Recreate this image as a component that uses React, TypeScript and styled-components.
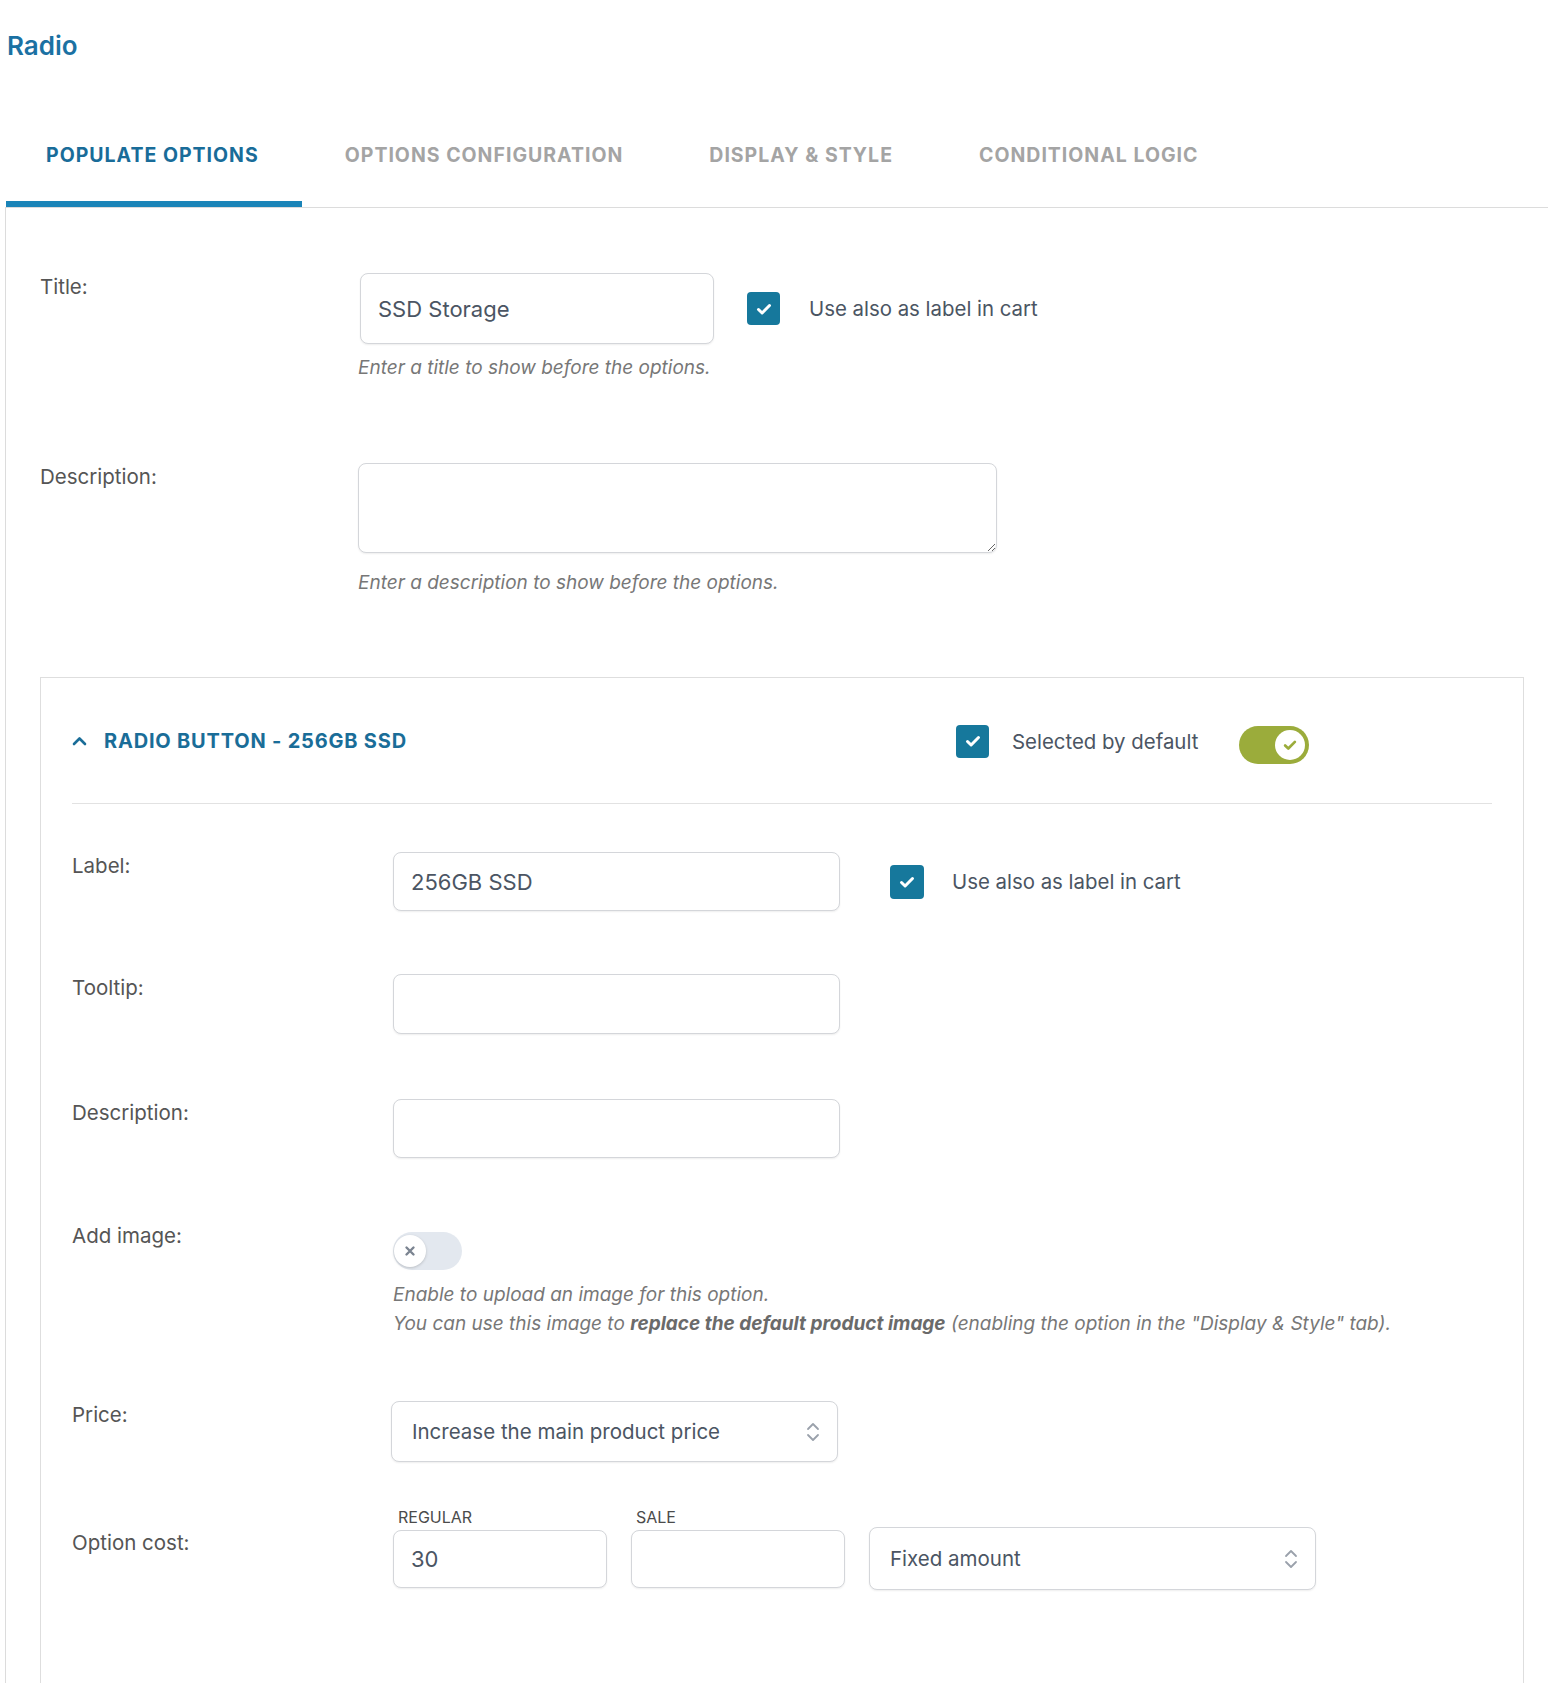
import React from 'react';
import styled, { createGlobalStyle } from 'styled-components';

const GlobalStyle = createGlobalStyle`
  * { box-sizing: border-box; }
  body {
    margin: 0;
    background: #ffffff;
    font-family: Inter, "Noto Sans", sans-serif;
    color: #4b5563;
  }
`;

const Page = styled.div`
  width: 1550px;
  height: 1683px;
  overflow: hidden;
`;

const Heading = styled.h2`
  margin: 0;
  padding: 30px 0 0 7px;
  font-size: 26px;
  line-height: 32px;
  font-weight: 600;
  color: #1b71a3;
`;

const Container = styled.div`
  margin: 45px 2px 0 5px;
`;

const TabList = styled.div`
  display: flex;
  padding-left: 1px;
  border-bottom: 1px solid #dcdcdc;
`;

const Tab = styled.div<{ active?: boolean }>`
  padding: 37px 43px 35px ${p => (p.active ? 40 : 43)}px;
  font-size: 19.5px;
  line-height: 22px;
  font-weight: 700;
  letter-spacing: 1px;
  text-transform: uppercase;
  color: ${p => (p.active ? '#196c99' : '#a4a4a4')};
  border-bottom: 6px solid ${p => (p.active ? '#1a84b8' : 'transparent')};
`;

const Panel = styled.div`
  border-left: 1px solid #dcdcdc;
  padding: 65px 24px 0 34px;
`;

const Row = styled.div<{ gap: number }>`
  display: grid;
  grid-template-columns: 318px 1fr;
  margin-bottom: ${p => p.gap}px;
`;

const Label = styled.div`
  font-size: 20.5px;
  line-height: 28px;
  color: #555;
`;

const Line = styled.div`
  display: flex;
  align-items: center;
`;

const TextInput = styled.input<{ w: number; h: number }>`
  width: ${p => p.w}px;
  height: ${p => p.h}px;
  padding: 0 17px;
  border: 1px solid #d4d6da;
  border-radius: 8px;
  box-shadow: 0 1px 2px rgba(0, 0, 0, 0.07);
  background: #fff;
  font-family: Inter, "Noto Sans", sans-serif;
  font-size: 22px;
  color: #4b5563;
  outline: none;
`;

const TextArea = styled.textarea`
  display: block;
  width: 639px;
  height: 90px;
  border: 1px solid #d4d6da;
  border-radius: 8px;
  box-shadow: 0 1px 2px rgba(0, 0, 0, 0.07);
  background: #fff;
  resize: vertical;
  outline: none;
`;

const Help = styled.div<{ top: number; lh?: number }>`
  margin-top: ${p => p.top}px;
  font-size: 19px;
  line-height: ${p => p.lh ?? 24}px;
  font-style: italic;
  color: #777;
  b { font-weight: 700; color: #6a6a6a; }
`;

const CheckBox = styled.span<{ left: number; size: number }>`
  display: inline-flex;
  align-items: center;
  justify-content: center;
  flex: 0 0 auto;
  width: ${p => p.size}px;
  height: ${p => p.size}px;
  margin-left: ${p => p.left}px;
  border-radius: 4px;
  background: #16789c;
`;

const CheckText = styled.span<{ left: number }>`
  margin-left: ${p => p.left}px;
  font-size: 20.4px;
  color: #4b5563;
  white-space: nowrap;
`;

const Card = styled.div`
  border: 1px solid #dedede;
  border-bottom: none;
  padding: 0 31px 160px;
`;

const CardHeader = styled.div`
  display: flex;
  align-items: center;
  height: 126px;
  padding: 43px 0 42px;
  border-bottom: 1px solid #e2e2e2;
`;

const CardTitle = styled.div`
  flex: 0 0 884px;
  display: flex;
  align-items: center;
  gap: 17px;
  font-size: 20px;
  font-weight: 700;
  letter-spacing: 0.8px;
  color: #1a6d98;
`;

const Fields = styled.div`
  padding-top: 48px;
`;

const FieldRow = styled.div<{ gap: number }>`
  display: grid;
  grid-template-columns: 321px 1fr;
  margin-bottom: ${p => p.gap}px;
`;

const Toggle = styled.span<{ on?: boolean; left?: number; top?: number }>`
  display: flex;
  align-items: center;
  justify-content: ${p => (p.on ? 'flex-end' : 'flex-start')};
  width: ${p => (p.on ? 70 : 69)}px;
  height: 38px;
  margin-left: ${p => p.left ?? 0}px;
  margin-top: ${p => p.top ?? 0}px;
  padding: 0 4px;
  border-radius: 19px;
  background: ${p => (p.on ? '#9bac3b' : '#e3e8ef')};
`;

const Knob = styled.span<{ on?: boolean }>`
  display: flex;
  align-items: center;
  justify-content: center;
  width: ${p => (p.on ? 30 : 32)}px;
  height: ${p => (p.on ? 30 : 32)}px;
  margin-left: ${p => (p.on ? 0 : -3)}px;
  border-radius: 50%;
  background: #fff;
  box-shadow: ${p => (p.on ? 'none' : '0 1px 3px rgba(0,0,0,0.18)')};
`;

const ToggleWrap = styled.div`
  padding-top: 10px;
`;

const SelectBox = styled.div<{ w: number; h: number; pad: number }>`
  display: flex;
  align-items: center;
  justify-content: space-between;
  width: ${p => p.w}px;
  height: ${p => p.h}px;
  padding: 0 ${p => p.pad - 4}px 0 ${p => p.pad}px;
  border: 1px solid #d4d6da;
  border-radius: 8px;
  box-shadow: 0 1px 2px rgba(0, 0, 0, 0.07);
  background: #fff;
  font-size: 20.5px;
  color: #4b5563;
`;

const CostGrid = styled.div`
  display: grid;
  grid-template-columns: 214px 214px 447px;
  column-gap: 24px;
  align-items: center;
  margin-top: -22px;
`;

const SmallLabel = styled.div`
  padding-left: 5px;
  font-size: 16px;
  line-height: 20px;
  color: #4b4b4b;
  text-transform: uppercase;
`;

const Check = ({ color = '#fff', size = 18 }: { color?: string; size?: number }) => (
  <svg width={size} height={size} viewBox="0 0 18 18" fill="none">
    <path d="M3.5 9.5l3.6 3.5L14.5 5.5" stroke={color} strokeWidth="3" strokeLinecap="round" strokeLinejoin="round" />
  </svg>
);

const Chevrons = () => (
  <svg width="16" height="24" viewBox="0 0 16 24" fill="none">
    <path d="M3 9l5-5 5 5M3 15l5 5 5-5" stroke="#9aa1ab" strokeWidth="1.8" strokeLinecap="round" strokeLinejoin="round" />
  </svg>
);

const Select = ({ w, h, pad, value }: { w: number; h: number; pad: number; value: string }) => (
  <SelectBox w={w} h={h} pad={pad}>
    <span>{value}</span>
    <Chevrons />
  </SelectBox>
);

export default function App() {
  return (
    <Page>
      <GlobalStyle />
      <Heading>Radio</Heading>
      <Container>
        <TabList>
          <Tab active>Populate options</Tab>
          <Tab>Options configuration</Tab>
          <Tab>Display &amp; style</Tab>
          <Tab>Conditional logic</Tab>
        </TabList>

        <Panel>
          <Row gap={83}>
            <Label>Title:</Label>
            <div>
              <Line>
                <TextInput w={354} h={71} style={{ marginLeft: 2 }} defaultValue="SSD Storage" />
                <CheckBox left={33} size={33}><Check /></CheckBox>
                <CheckText left={29}>Use also as label in cart</CheckText>
              </Line>
              <Help top={12}>Enter a title to show before the options.</Help>
            </div>
          </Row>

          <Row gap={82}>
            <Label>Description:</Label>
            <div>
              <TextArea />
              <Help top={18}>Enter a description to show before the options.</Help>
            </div>
          </Row>

          <Card>
            <CardHeader>
              <CardTitle>
                <svg width="15" height="10" viewBox="0 0 15 10" fill="none">
                  <path d="M2 8l5.5-5.5L13 8" stroke="#1a6d98" strokeWidth="2.6" strokeLinecap="round" strokeLinejoin="round" />
                </svg>
                RADIO BUTTON - 256GB SSD
              </CardTitle>
              <CheckBox left={0} size={33}><Check /></CheckBox>
              <CheckText left={23}>Selected by default</CheckText>
              <Toggle on left={41} top={8}>
                <Knob on><Check color="#9bac3b" size={16} /></Knob>
              </Toggle>
            </CardHeader>

            <Fields>
              <FieldRow gap={63}>
                <Label>Label:</Label>
                <Line>
                  <TextInput w={447} h={59} defaultValue="256GB SSD" />
                  <CheckBox left={50} size={34}><Check /></CheckBox>
                  <CheckText left={28}>Use also as label in cart</CheckText>
                </Line>
              </FieldRow>

              <FieldRow gap={65}>
                <Label>Tooltip:</Label>
                <div><TextInput w={447} h={60} /></div>
              </FieldRow>

              <FieldRow gap={64}>
                <Label>Description:</Label>
                <div><TextInput w={447} h={59} /></div>
              </FieldRow>

              <FieldRow gap={63}>
                <Label>Add image:</Label>
                <div>
                  <ToggleWrap>
                    <Toggle>
                      <Knob>
                        <svg width="12" height="12" viewBox="0 0 12 12" fill="none">
                          <path d="M2.5 2.5l7 7M9.5 2.5l-7 7" stroke="#7b8491" strokeWidth="2.4" strokeLinecap="round" />
                        </svg>
                      </Knob>
                    </Toggle>
                  </ToggleWrap>
                  <Help top={10} lh={29}>
                    Enable to upload an image for this option.
                    <br />
                    You can use this image to <b>replace the default product image</b> (enabling the option in the "Display &amp; Style" tab).
                  </Help>
                </div>
              </FieldRow>

              <FieldRow gap={67}>
                <Label>Price:</Label>
                <div style={{ marginLeft: -2 }}>
                  <Select w={447} h={61} pad={20} value="Increase the main product price" />
                </div>
              </FieldRow>

              <FieldRow gap={0}>
                <Label>Option cost:</Label>
                <CostGrid>
                  <SmallLabel>Regular</SmallLabel>
                  <SmallLabel>Sale</SmallLabel>
                  <span />
                  <TextInput w={214} h={58} defaultValue="30" />
                  <TextInput w={214} h={58} />
                  <Select w={447} h={63} pad={20} value="Fixed amount" />
                </CostGrid>
              </FieldRow>
            </Fields>
          </Card>
        </Panel>
      </Container>
    </Page>
  );
}
